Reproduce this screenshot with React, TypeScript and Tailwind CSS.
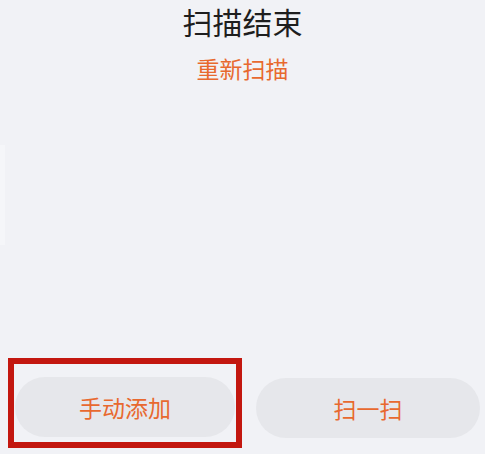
import React from "react";

export default function App() {
  return (
    <div
      className="relative flex h-[454px] w-[485px] flex-col overflow-hidden bg-[#f1f2f6]"
      style={{ fontFamily: '"Noto Sans CJK SC", "Noto Sans", sans-serif' }}
    >
      <div className="absolute left-0 top-[145px] h-[100px] w-[5px] bg-[#f5f6f9]" />
      <div className="mt-[6px] text-center text-[30px] leading-[30px] text-[#1e1e1e]">
        扫描结束
      </div>
      <div className="mt-[20px] text-center text-[23px] leading-[24px] text-[#e8692f]">
        重新扫描
      </div>
      <div className="mb-[6px] mt-auto flex items-start pl-[8px]">
        <div className="h-[90px] w-[234px] border-[6px] border-[#c3170f] px-[1px] pb-[5px] pt-[13px]">
          <div className="flex h-[60px] w-full items-center justify-center rounded-full bg-[#e6e7eb] text-[23px] text-[#e8692f]">
            手动添加
          </div>
        </div>
        <div className="ml-[14px] mt-[20px] flex h-[60px] w-[224px] items-center justify-center rounded-full bg-[#e6e7eb] text-[23px] text-[#e8692f]">
          扫一扫
        </div>
      </div>
    </div>
  );
}
